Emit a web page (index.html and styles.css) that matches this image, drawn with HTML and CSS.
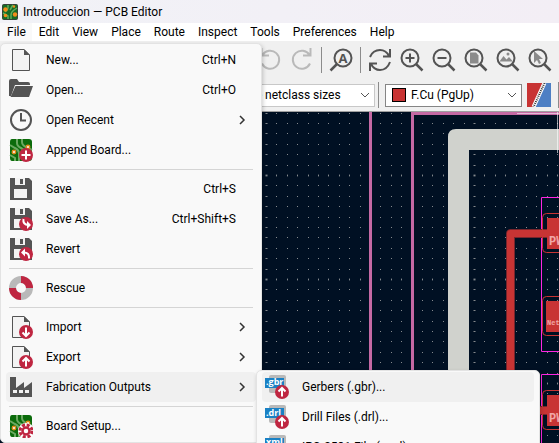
FILE: index.html
```
<!DOCTYPE html>
<html lang="en">
<head>
<meta charset="utf-8">
<title>Introduccion — PCB Editor</title>
<link rel="stylesheet" href="styles.css">
</head>
<body>
<svg class="defs" aria-hidden="true">
  <defs>
    <symbol id="pcb" viewBox="0 0 24 24">
      <path fill="#0b6b0b" d="M3 1h17q3 0 3 3v16q0 3-3 3H3q-2 0-2-3V4q0-3 2-3z"/>
      <path d="M8 1v4q0 3 4 5t4 6v7M13 1v3q0 3 4 5l6 3M1 17l5 3v3M1 7l5 3q4 2 4 6v7" fill="none" stroke="#6ba861" stroke-width="2"/>
      <g fill="#fff" stroke="#e08a1a" stroke-width="1.5"><circle cx="5" cy="14" r="1.7"/><circle cx="19" cy="9" r="1.7"/></g>
    </symbol>
    <symbol id="page" viewBox="0 0 24 24">
      <path d="M3.500 1.500H15L20.500 7v15.500h-17z" fill="#f3f3f3" stroke="#545454"/>
      <path d="M15 1l6 6h-6z" fill="#545454"/>
    </symbol>
    <symbol id="floppy" viewBox="0 0 24 24">
      <path d="M1 1h19l3 3v19H1z" fill="#545454"/>
      <path d="M6 1h10v7H6zM5 12h13v9H5z" fill="#f3f3f3"/>
      <path d="M11 2h3v5h-3z" fill="#545454"/>
    </symbol>
    <symbol id="disc" viewBox="0 0 24 24"><circle cx="17" cy="17" r="7" fill="#bf2641"/></symbol>
    <symbol id="up" viewBox="0 0 24 24"><use href="#disc"/><path d="M17 21.500v-8M13.500 16.500L17 13l3.500 3.500" fill="none" stroke="#fff" stroke-width="2"/></symbol>
    <symbol id="down" viewBox="0 0 24 24"><use href="#disc"/><path d="M17 12.500v8M13.500 17.500L17 21l3.500-3.500" fill="none" stroke="#fff" stroke-width="2"/></symbol>
    <symbol id="lens" viewBox="0 0 24 24"><circle cx="10" cy="10" r="8.500" fill="none" stroke="#545454" stroke-width="2"/><path d="M16 16l6.500 6.500" stroke="#545454" stroke-width="2.500"/></symbol>
    <symbol id="tag" viewBox="0 0 24 24"><rect x="4" y="0" width="17" height="18" rx="2" fill="#b9b9b9"/><path d="M0 3h19v10H0z" fill="#1a81c4"/></symbol>
    <symbol id="next" viewBox="0 0 8 12"><path d="M2 2l4 4-4 4" fill="none" stroke="#333" stroke-width="1.500"/></symbol>
  </defs>
</svg>

<header class="titlebar">
  <svg class="app-icon" viewBox="0 0 16 16" aria-hidden="true">
    <rect x=".5" y=".5" width="15" height="15" rx="1" fill="#176b25" stroke="#35433a"/>
    <path d="M6 1v3q0 2-3 4M9 15v-4q0-3 3-5l3-2M11 1L8 6M1 9l5 3v3" fill="none" stroke="#61ad5c" stroke-width="1.500"/>
    <g fill="#f28c1b"><circle cx="3.500" cy="5.500" r="2.200"/><circle cx="3.500" cy="11.500" r="1.800"/><circle cx="13" cy="10.500" r="2.200"/><circle cx="12" cy="2.500" r="1.200"/></g>
  </svg>
  <h1 class="title">Introduccion — PCB Editor</h1>
</header>

<nav class="menubar">
  <button class="menu-title open" aria-expanded="true">File</button>
  <button class="menu-title">Edit</button>
  <button class="menu-title">View</button>
  <button class="menu-title">Place</button>
  <button class="menu-title">Route</button>
  <button class="menu-title">Inspect</button>
  <button class="menu-title">Tools</button>
  <button class="menu-title">Preferences</button>
  <button class="menu-title">Help</button>

  <div class="menu file-menu">
    <button class="item"><svg class="icon"><use href="#page"/></svg><span class="label">New...</span><kbd>Ctrl+N</kbd></button>
    <button class="item"><svg class="icon" viewBox="0 0 24 24"><path d="M0 3q0-2 2-2h6l2 3h9q2 0 2 2v1H6L2 18H0z" fill="#545454"/><path d="M6.500 8H24l-4 11H1.500z" fill="#545454"/></svg><span class="label">Open...</span><kbd>Ctrl+O</kbd></button>
    <button class="item"><svg class="icon" viewBox="0 0 24 24" fill="none" stroke="#545454" stroke-width="2"><circle cx="12" cy="12" r="10"/><path d="M12 5v7.500h5"/></svg><span class="label">Open Recent</span><svg class="next"><use href="#next"/></svg></button>
    <button class="item"><svg class="icon" viewBox="0 0 24 24"><use href="#pcb"/><use href="#disc"/><path d="M17 12.500v9M12.500 17h9" stroke="#fff" stroke-width="2"/></svg><span class="label">Append Board...</span></button>
    <hr>
    <button class="item"><svg class="icon"><use href="#floppy"/></svg><span class="label">Save</span><kbd>Ctrl+S</kbd></button>
    <button class="item"><svg class="icon" viewBox="0 0 24 24"><use href="#floppy"/><use href="#disc"/><path d="M14.500 12q-1 5.500 5 6" fill="none" stroke="#fff" stroke-width="2"/><path d="M18 14l4 4-4 4z" fill="#fff"/></svg><span class="label">Save As...</span><kbd>Ctrl+Shift+S</kbd></button>
    <button class="item"><svg class="icon" viewBox="0 0 24 24"><use href="#floppy"/><use href="#disc"/><path d="M15 15.500q5.500 0 5 6" fill="none" stroke="#fff" stroke-width="2"/><path d="M16 11.500v8l-4-4z" fill="#fff"/></svg><span class="label">Revert</span></button>
    <hr>
    <button class="item"><svg class="icon" viewBox="0 0 24 24" fill="none" stroke-width="7"><circle cx="12" cy="12" r="8.500" stroke="#b9b9b9"/><path d="M12 3.500a8.500 8.500 0 0 1 8.500 8.500M12 20.500A8.500 8.500 0 0 1 3.500 12" stroke="#bf2641"/></svg><span class="label">Rescue</span></button>
    <hr>
    <button class="item"><svg class="icon" viewBox="0 0 24 24"><use href="#page"/><use href="#down"/></svg><span class="label">Import</span><svg class="next"><use href="#next"/></svg></button>
    <button class="item"><svg class="icon" viewBox="0 0 24 24"><use href="#page"/><use href="#up"/></svg><span class="label">Export</span><svg class="next"><use href="#next"/></svg></button>
    <div class="branch">
      <button class="item active" aria-expanded="true"><svg class="icon" viewBox="0 0 24 24"><path d="M1 2h6v11l8-6v6l8-6v15H1z" fill="#545454"/><path d="M4 15h4v3H4zM10 15h4v3h-4zM16 15h4v3h-4z" fill="#f3f3f3"/></svg><span class="label">Fabrication Outputs</span><svg class="next"><use href="#next"/></svg></button>
      <div class="menu submenu">
        <button class="item active"><svg class="icon" viewBox="0 0 24 24"><use href="#tag"/><text class="ext" x="1" y="10">.gbr</text><use href="#up"/></svg><span class="label">Gerbers (.gbr)...</span></button>
        <button class="item"><svg class="icon" viewBox="0 0 24 24"><use href="#tag"/><text class="ext" x="1" y="11">.drl</text><use href="#up"/></svg><span class="label">Drill Files (.drl)...</span></button>
        <button class="item"><svg class="icon" viewBox="0 0 24 24"><use href="#tag"/><text class="ext" x="1" y="10">xml</text><use href="#up"/></svg><span class="label">IPC-2581 File (.xml)...</span></button>
      </div>
    </div>
    <hr>
    <button class="item"><svg class="icon" viewBox="0 0 24 24"><use href="#pcb"/><circle cx="17" cy="17" r="5.500" fill="none" stroke="#fff" stroke-width="5"/><circle cx="17" cy="17" r="6" fill="none" stroke="#bf2641" stroke-width="3" stroke-dasharray="3 1.710"/><circle cx="17" cy="17" r="3.500" fill="#fff" stroke="#bf2641" stroke-width="2.500"/></svg><span class="label">Board Setup...</span></button>
  </div>
</nav>

<section class="toolbars">
  <div class="toolbar main-tools">
    <button class="tool" aria-label="Undo"><svg class="icon" viewBox="0 0 24 24" fill="none" stroke="#b9b9b9" stroke-width="2"><path d="M4.500 7A9 9 0 1 1 4 15.500M3.500 0v7.500H11"/></svg></button>
    <button class="tool" aria-label="Redo"><svg class="icon" viewBox="0 0 24 24" fill="none" stroke="#b9b9b9" stroke-width="2"><path d="M19.500 7A9 9 0 1 0 20 15.500M20.500 0v7.500H13"/></svg></button>
    <span class="divider"></span>
    <button class="tool" aria-label="Find"><svg class="icon" viewBox="0 0 24 24"><circle cx="14" cy="10" r="8.500" fill="none" stroke="#545454" stroke-width="2"/><path d="M8 16l-6.500 6.500" stroke="#545454" stroke-width="2.500"/><text class="find-letter" x="14" y="14.500">A</text></svg></button>
    <span class="divider"></span>
    <button class="tool" aria-label="Refresh"><svg class="icon" viewBox="0 0 24 24" fill="none" stroke="#545454" stroke-width="2"><path d="M2 9q3-7 10-7 6 0 9 6M22 1v7.500h-7M22 14q-3 8-10 8-6 0-9-6M2 23v-7.500h7"/></svg></button>
    <button class="tool" aria-label="Zoom in"><svg class="icon" viewBox="0 0 24 24"><use href="#lens"/><path d="M10 5.500v9M5.500 10h9" stroke="#545454" stroke-width="2"/></svg></button>
    <button class="tool" aria-label="Zoom out"><svg class="icon" viewBox="0 0 24 24"><use href="#lens"/><path d="M5.500 10h9" stroke="#545454" stroke-width="2"/></svg></button>
    <button class="tool" aria-label="Zoom to fit"><svg class="icon" viewBox="0 0 24 24"><path d="M6 4.500h6l2.500 3v8H6z" fill="#8b8b8b"/><use href="#lens"/></svg></button>
    <button class="tool" aria-label="Zoom to objects"><svg class="icon" viewBox="0 0 24 24"><path d="M3.500 13.500L7.500 8l3 3.500L13 9l4 4.500z" fill="#8b8b8b"/><circle cx="12" cy="6" r="1.500" fill="#8b8b8b"/><use href="#lens"/></svg></button>
    <button class="tool" aria-label="Zoom to selection"><svg class="icon" viewBox="0 0 24 24"><path d="M6 3v12l3-3 2 4 2-1-2-4h4z" fill="#8b8b8b"/><use href="#lens"/></svg></button>
  </div>
  <div class="toolbar option-tools">
    <span class="combo via-combo"><select aria-label="Via size"><option>Via: use netclass sizes</option></select><svg class="drop" viewBox="0 0 10 6"><path d="M1 1l4 4 4-4"/></svg></span>
    <span class="divider"></span>
    <span class="combo layer-combo"><i class="swatch"></i><select aria-label="Layer"><option>F.Cu (PgUp)</option></select><svg class="drop" viewBox="0 0 10 6"><path d="M1 1l4 4 4-4"/></svg></span>
    <button class="pair" aria-label="Layer pair"><svg class="icon" viewBox="0 0 24 24"><path d="M0 0h24v24H0z" fill="#4d7fc4"/><path d="M0 0h17L6 24H0z" fill="#c83434"/><path d="M17.500 0l-11 24" stroke="#fff" stroke-width="4"/><path d="M17.500 0l-11 24" stroke="#333" stroke-width="2" stroke-dasharray="1 1"/></svg></button>
    <span class="divider"></span>
  </div>
</section>

<main class="board">
  <svg class="drawing" role="img" aria-label="Board layout">
    <defs>
      <g id="dots" fill="#85898d">
        <path d="M0 0h1v1h-1zM10 0h1v1h-1zM21 0h1v1h-1zM31 0h1v1h-1zM42 0h1v1h-1zM52 0h1v1h-1zM62 0h1v1h-1zM73 0h1v1h-1zM83 0h1v1h-1zM94 0h1v1h-1z"/>
        <path d="M-1 0h3v1h-3z" opacity=".5"/>
      </g>
      <pattern id="grid" x="265" y="62" width="104" height="104" patternUnits="userSpaceOnUse">
        <g transform="translate(1 1)">
          <use href="#dots" y="-1" opacity=".4"/><use href="#dots"/><use href="#dots" y="1" opacity=".4"/>
          <use href="#dots" y="10"/><use href="#dots" y="21"/><use href="#dots" y="31"/><use href="#dots" y="42"/><use href="#dots" y="52"/><use href="#dots" y="62"/><use href="#dots" y="73"/><use href="#dots" y="83"/><use href="#dots" y="94"/>
        </g>
      </pattern>
    </defs>
    <rect width="100%" height="100%" fill="url(#grid)"/>
    <path d="M369 0h3v400h-3zM411 0h300v3H414v400h-3z" fill="#c569a4"/>
    <path d="M517 1.500h100" stroke="#e3bdd9" fill="none"/>
    <path d="M456 17h200v21H469v400h-21V25q0-8 8-8z" fill="#d0d2cd"/>
    <path d="M557.500 0v41" stroke="#fff" opacity=".6"/>
    <g fill="none" stroke="#ff26e2"><path d="M700 85.500H541.500v154H700M700 262.500H541.500V500"/></g>
    <g fill="none" stroke-linejoin="round">
      <path d="M510.500 400V121.500H550M540 298.500h20" stroke="#78252c" stroke-width="9"/>
      <path d="M510.500 400V121.500H550M540 298.500h20" stroke="#c83434" stroke-width="7"/>
    </g>
    <g fill="none" stroke="#c83434"><rect x="542.500" y="101.500" width="60" height="39" rx="4"/><rect x="542.500" y="184.500" width="60" height="39" rx="4"/><rect x="542.500" y="278.500" width="60" height="39" rx="4"/></g>
    <path d="M547 106h50v31h-50zM546 189h50v31h-50zM547 283h50v31h-50z" fill="#c83434"/>
    <text class="net" x="549" y="133">PW</text>
    <text class="net small" x="547" y="213">Net</text>
    <text class="net" x="549" y="310">PW</text>
  </svg>
</main>
</body>
</html>
```
FILE: styles.css
```
* { box-sizing: border-box; }

body {
  margin: 0;
  height: 100vh;
  display: flex;
  flex-direction: column;
  overflow: hidden;
  background: #f0f0f0;
  color: #000;
  font: 12px/16px Roboto, "Open Sans", sans-serif;
}

button, select {
  margin: 0;
  padding: 0;
  border: 0;
  background: none;
  color: inherit;
  font: inherit;
}

.defs { position: absolute; width: 0; height: 0; }
.icon { width: 24px; height: 24px; flex: none; display: block; }

.titlebar {
  display: flex;
  align-items: center;
  gap: 5px;
  height: 23px;
  padding: 0 2px;
  background: linear-gradient(90deg, #f1f2f7, #f3eef5);
}
.app-icon { width: 16px; height: 16px; }
.title { margin: 0; font-size: 12px; font-weight: 400; }

.menubar {
  position: relative;
  z-index: 1;
  display: flex;
  height: 18px;
  background: #fff;
}
.menu-title { padding: 0 6px 0 7px; }
.menu-title.open { background: #f9f9f9; }

.menu {
  position: absolute;
  padding: 1px 5px;
  border: 1px solid #e3e3e3;
  border-radius: 5px;
  background: #f9f9f9;
  box-shadow: 1px 2px 4px #0003;
}
.file-menu { top: 20px; left: 0; width: 262px; }
.submenu { top: -2px; left: 250px; width: 284px; }
.branch { position: relative; }

.item {
  display: flex;
  align-items: center;
  width: 100%;
  height: 30px;
  padding: 0 10px 0 3px;
  border-radius: 4px;
  text-align: left;
}
.item.active { background: #f0f0f0; }
.label { flex: 1; padding-left: 13px; white-space: nowrap; }
.item kbd { padding-right: 10px; font: inherit; }
.next { width: 8px; height: 12px; flex: none; }

.menu hr {
  height: 1px;
  margin: 4px 3px;
  border: 0;
  background: #d5d5d5;
}

.ext { fill: #fff; font: 700 9px "Open Sans", sans-serif; }
.find-letter {
  fill: #545454;
  font: 700 13px "Open Sans", sans-serif;
  text-anchor: middle;
}

.toolbars {
  border-bottom: 1px solid #a0a0a0;
  background: #f0f0f0;
}
.toolbar { display: flex; align-items: center; }
.main-tools { height: 38px; padding-left: 254px; }
.option-tools { height: 32px; padding-left: 150px; }
.tool {
  display: flex;
  justify-content: center;
  width: 32px;
  flex: none;
}
.divider {
  width: 1px;
  height: 26px;
  margin: 0 3px;
  flex: none;
  background: #8b8b8b;
}

.combo {
  display: flex;
  align-items: center;
  height: 23px;
  border: 1px solid #c8c8c8;
  background: #fff;
  flex: none;
}
.combo select {
  flex: 1;
  min-width: 0;
  height: 100%;
  appearance: none;
  outline: 0;
}
.via-combo { width: 225px; padding: 0 4px 0 69px; }
.layer-combo { width: 137px; margin-left: 3px; padding: 0 4px 0 6px; gap: 5px; border-color: #858585; }
.swatch { width: 14px; height: 14px; border: 1px solid #000; background: #c83434; }
.drop { width: 10px; height: 6px; fill: none; stroke: #555; }
.pair { margin: 0 4px 0 5px; }

.board {
  flex: 1;
  min-height: 0;
  background: #001023;
}
.drawing { display: block; width: 100%; height: 100%; }
.net { fill: #f0a7a7; font: 700 12px "Liberation Mono", monospace; }
.net.small { font-size: 7px; }
```
